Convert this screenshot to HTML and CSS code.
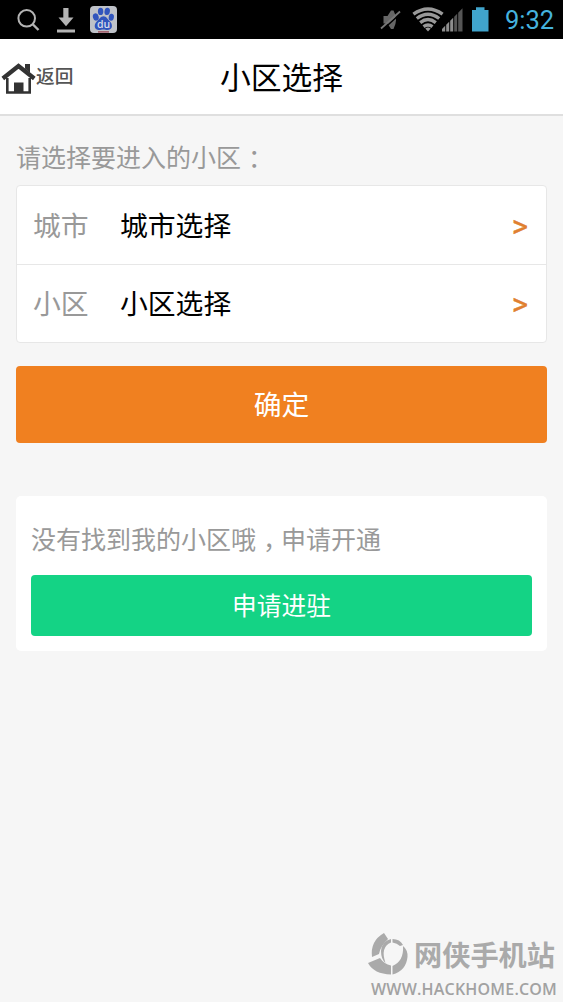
FILE: index.html
```html
<!DOCTYPE html>
<html lang="zh-CN">
<head>
<meta charset="utf-8">
<title>小区选择</title>
<link rel="stylesheet" href="styles.css">
</head>
<body>
<div class="statusbar">
  <svg class="status-left" width="120" height="39" viewBox="0 0 120 39">
    <g fill="none" stroke="#b4b4b4" stroke-width="2">
      <circle cx="26.700" cy="18.300" r="8.300"/>
      <path d="M32.500 24l6 6" stroke-width="2.400"/>
    </g>
    <path fill="#b4b4b4" d="M63.300 8h5.200v9.500h5L66 26.300l-7.500-8.800h4.800zM57 29.500h18v3H57z"/>
    <rect x="90" y="6" width="27" height="27" rx="4" fill="#bfc2c8"/>
    <g fill="#3155bd">
      <ellipse cx="95.800" cy="17" rx="2.900" ry="3.700" transform="rotate(-15 95.800 17)"/>
      <ellipse cx="100.600" cy="11.400" rx="2.700" ry="3.700"/>
      <ellipse cx="107.200" cy="11.400" rx="2.700" ry="3.700" transform="rotate(10 107.200 11.400)"/>
      <ellipse cx="111.300" cy="17.200" rx="2.600" ry="3.500" transform="rotate(10 111.300 17.200)"/>
      <path d="M103.500 16.300c3 0 4 3 6 4.700 3.500 3 3.500 8.500-1.500 8.900-2 .2-3-.5-4.700-.5s-3 .7-5 .5c-4.500-.5-4.500-6-1.300-8.700 2.500-2 3.500-4.900 6.500-4.900z"/>
    </g>
    <text class="paw-text" x="103.500" y="27.700" text-anchor="middle">du</text>
    <path d="M98 31.900h11" stroke="#9b4b58" stroke-width="1.400"/>
  </svg>
  <svg class="status-right" width="120" height="39" viewBox="375 0 120 39">
    <path fill="#666" d="M383.500 16h4l3.500-5.500h2.500q5 9 0 18.500h-2.500l-3.500-5.500h-4z"/>
    <path d="M382.500 30L401 13" stroke="#000" stroke-width="1.600"/>
    <path d="M381 28.500L400 11.500" stroke="#777" stroke-width="1.800"/>
    <g fill="none" stroke="#999" stroke-width="3.400">
      <path d="M413.400 14.200Q428 3.800 442.600 14.200" />
      <path d="M416.800 18.500Q428 10 439.200 18.500"/>
      <path d="M420.200 22.600Q428 16.600 435.800 22.600"/>
      <path d="M423.500 26.600Q428 23.400 432.500 26.600"/>
    </g>
    <path fill="#999" d="M425.300 28.500Q428 26.500 430.700 28.500L428 31.500z"/>
    <g fill="#8e8e8e">
      <path d="M442 31.500v-2.500l3.200-3.200v5.700zM446.200 31.500v-6.700l3-3v9.700zM450.200 31.500V20.800l3-3v13.700z"/>
      <path fill="#555" d="M454.200 31.500V16.800l3-3v17.700zM458.200 31.500V12.800l4.300-4.500v23.200z"/>
    </g>
    <path fill="#40a4cc" d="M472 10h4V7.300h8.500V10h4v21.500H472z"/>
  </svg>
  <span class="clock">9:32</span>
</div>

<header class="header">
  <a class="back">
    <svg width="36" height="34" viewBox="0 0 36 34">
      <path fill="none" stroke="#333" stroke-width="2.600" d="M7.300 17v14.500h22.400V17"/>
      <path fill="#333" d="M14 21.500h9.500V32H14zM25 3h5v9l-5-4.500z"/>
      <path fill="none" stroke="#333" stroke-width="4.200" d="M2.800 17.500L18.500 5l15.800 12.500"/>
    </svg>
    <span class="back-text">返回</span>
  </a>
  <h1 class="title">小区选择</h1>
</header>

<main class="content">
  <p class="hint">请选择要进入的小区<span class="mid">：</span></p>
  <div class="list">
    <div class="row">
      <span class="row-label">城市</span>
      <span class="row-value">城市选择</span>
      <span class="arrow">&gt;</span>
    </div>
    <div class="row">
      <span class="row-label">小区</span>
      <span class="row-value">小区选择</span>
      <span class="arrow">&gt;</span>
    </div>
  </div>
  <div class="btn btn-confirm">确定</div>
  <section class="apply">
    <p class="apply-hint">没有找到我的小区哦<span class="mid">，</span>申请开通</p>
    <div class="btn btn-apply">申请进驻</div>
  </section>
</main>

<footer class="mark">
  <div class="mark-top">
    <svg width="42" height="46" viewBox="3 5 42 46">
      <g fill="#aaa">
        <path d="M20 6L24 12Q16 20 15 27L8 30Q6 14 20 6Z"/>
        <path d="M4 36L16 31Q20 37 27 38.500V47.500Q10 47 4 36Z"/>
        <path d="M28.500 39Q40 34 39 19Q44 23 43.500 30Q42 44 28.500 47.500Z"/>
        <path d="M27 12V15.500Q16 20 21.500 36Q17 32 17 24Q18 14 27 12Z"/>
        <path d="M28.500 12Q36 12 39 18L36 19Q33 16 28.500 15.500Z"/>
      </g>
    </svg>
    <span class="mark-name">网侠手机站</span>
  </div>
  <div class="mark-url">WWW.HACKHOME.COM</div>
</footer>
</body>
</html>
```
FILE: styles.css
```css
* {
  box-sizing: border-box;
}

body {
  margin: 0;
  height: 1002px;
  display: flex;
  flex-direction: column;
  overflow: hidden;
  background: #f6f6f6;
  font-family: "Noto Sans CJK SC", sans-serif;
}

h1, p {
  margin: 0;
  font-weight: 400;
}

.statusbar {
  height: 39px;
  flex: none;
  display: flex;
  align-items: center;
  background: #000;
}

.status-right {
  margin-left: 255px;
}

.paw-text {
  font: 600 10.500px "Open Sans", sans-serif;
  fill: #d8dcea;
}

.clock {
  margin-left: 10px;
  padding-top: 2px;
  font: 25.500px/39px Roboto, sans-serif;
  color: #45b2de;
}

.header {
  height: 77px;
  flex: none;
  display: grid;
  grid-template-columns: 1fr auto 1fr;
  align-items: center;
  background: #fff;
  border-bottom: 2px solid #dfdfdf;
}

.back {
  display: flex;
  align-items: center;
  padding-top: 2px;
  color: #555;
}

.back-text {
  font-size: 18.700px;
  font-weight: 500;
  line-height: 30px;
  padding-bottom: 5px;
}

.title {
  font-size: 30.800px;
  line-height: 44px;
  padding-bottom: 2px;
  color: #000;
}

.content {
  padding: 23px 16px 0;
}

/* Centres full-width punctuation in its cell. */
.mid {
  font-feature-settings: "halt";
  margin: 0 5.500px 0 7px;
}

.hint,
.apply-hint {
  font-size: 25px;
  line-height: 34px;
  color: #999;
}

.list {
  margin-top: 12px;
  height: 158px;
  display: grid;
  grid-template-rows: 1fr 1fr;
  background: #fff;
  border: 1px solid #e7e7e7;
  border-radius: 4px;
}

.row {
  display: flex;
  align-items: center;
  padding: 0 18px 2px 16px;
  font-size: 27.800px;
  line-height: 40px;
}

.row + .row {
  border-top: 1px solid #e7e7e7;
  padding-bottom: 4px;
}

.row-label {
  width: 87px;
  color: #999;
}

.row-value {
  flex: 1;
  color: #000;
}

.arrow {
  font: 400 31px/40px Roboto, sans-serif;
  padding-top: 6px;
  color: #e08030;
  -webkit-text-stroke: 0.400px #e08030;
}

.btn {
  display: flex;
  align-items: center;
  justify-content: center;
  padding-bottom: 3px;
  border-radius: 4px;
  color: #fff;
}

.btn-confirm {
  height: 77px;
  margin-top: 23px;
  background: #f08020;
  font-size: 27.800px;
}

.apply {
  height: 155px;
  margin-top: 53px;
  padding: 25px 15px 0;
  background: #fff;
  border-radius: 5px;
}

.btn-apply {
  height: 61px;
  margin-top: 19.500px;
  background: #14d385;
  font-size: 24.700px;
}

.mark {
  width: 196px;
  margin: auto 0 0 367px;
  padding-bottom: 2px;
  color: #a2a2a2;
}

.mark-top {
  display: flex;
  align-items: center;
  gap: 5px;
}

.mark-name {
  font-size: 28.200px;
  font-weight: 700;
  line-height: 44px;
  padding-bottom: 2px;
  white-space: nowrap;
  color: #aaa;
}

.mark-url {
  padding-left: 4px;
  font: 600 16px/22px "Open Sans", sans-serif;
  letter-spacing: 0.200px;
  white-space: nowrap;
}
```
